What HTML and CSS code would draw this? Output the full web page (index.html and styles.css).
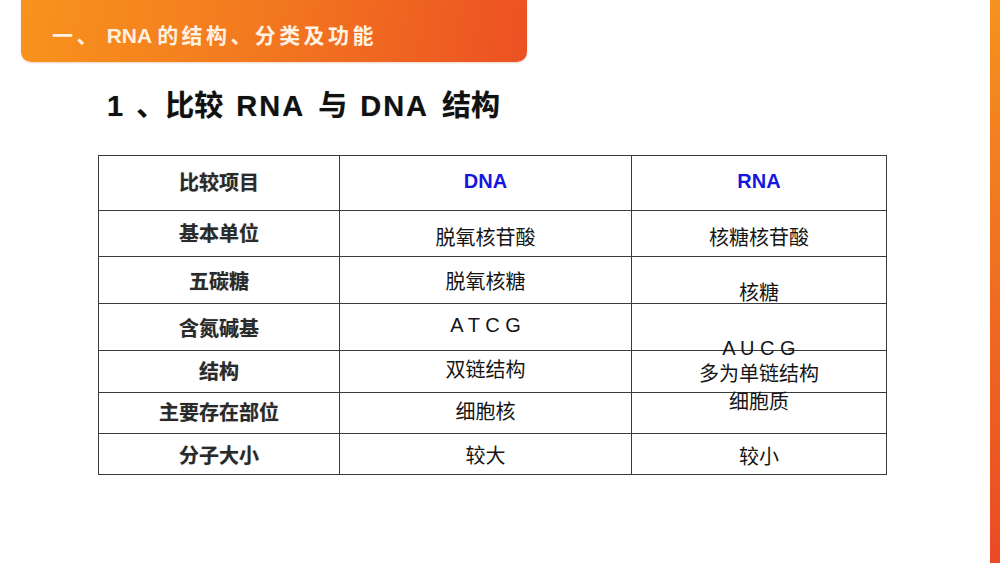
FILE: index.html
```html
<!DOCTYPE html>
<html lang="zh-CN">
<head>
<meta charset="utf-8">
<title>RNA 的结构、分类及功能</title>
<link rel="stylesheet" href="styles.css">
</head>
<body>
<div class="page">
  <div class="main">
    <div class="banner">
      <span class="cjk">一、</span> RNA <span class="cjk">的结构、分类及功能</span>
    </div>
    <h1 class="title">1 、比较 <span class="lat">RNA</span> 与 <span class="lat">DNA</span> 结构</h1>
    <div class="grid">
      <div class="cell head">比较项目</div>
      <div class="cell blue up2">DNA</div>
      <div class="cell blue up2">RNA</div>

      <div class="cell head">基本单位</div>
      <div class="cell down4">脱氧核苷酸</div>
      <div class="cell down4">核糖核苷酸</div>

      <div class="cell head down2">五碳糖</div>
      <div class="cell down2">脱氧核糖</div>
      <div class="cell top"><span class="low">核糖</span></div>

      <div class="cell head down2">含氮碱基</div>
      <div class="cell up2">A T C G</div>
      <div class="cell r4c3"></div>

      <div class="cell head">结构</div>
      <div class="cell up2">双链结构</div>
      <div class="cell r5c3"></div>

      <div class="cell head">主要存在部位</div>
      <div class="cell up1">细胞核</div>
      <div class="cell r6c3"></div>

      <div class="cell head down2">分子大小</div>
      <div class="cell down2">较大</div>
      <div class="cell down3">较小</div>

      <div class="overlay">
        <span class="ov-line">A U C G</span>
        <span class="ov-line">多为单链结构</span>
        <span class="ov-line">细胞质</span>
      </div>
    </div>
  </div>
  <div class="edge"></div>
</div>
</body>
</html>
```

FILE: styles.css
```css
* { box-sizing: border-box; }

html, body {
  margin: 0;
  padding: 0;
  background: #ffffff;
}

body {
  font-family: "Liberation Sans", "Noto Sans CJK SC", sans-serif;
  color: #111;
}

.page {
  display: flex;
  width: 1000px;
  height: 563px;
  overflow: hidden;
}

.main {
  flex: 1;
  display: flex;
  flex-direction: column;
  align-items: flex-start;
}

.edge {
  width: 10px;
  height: 563px;
  background: linear-gradient(180deg, #f6921d 0%, #f06a22 55%, #ea4a24 100%);
}

.banner {
  margin-left: 21px;
  width: 506px;
  height: 62px;
  border-radius: 0 0 10px 10px;
  background: linear-gradient(100deg, #f8931c 0%, #f37a1f 45%, #ec5123 100%);
  box-shadow: 0 1px 2px rgba(180, 80, 20, 0.25);
  padding: 22px 0 0 31px;
  font-size: 21px;
  line-height: 27px;
  font-weight: 700;
  color: #fff1e2;
  white-space: nowrap;
}

.banner .cjk {
  letter-spacing: 3.4px;
}

.title {
  margin: 26px 0 0 107px;
  font-size: 29px;
  line-height: 36px;
  font-weight: 700;
  color: #111;
  word-spacing: 5px;
  white-space: nowrap;
  text-shadow: 0 0 1px rgba(60, 60, 60, 0.5);
}

.title .lat {
  letter-spacing: 2px;
}

.grid {
  margin: 31px 0 0 98px;
  display: grid;
  grid-template-columns: 241px 292px 255px;
  grid-template-rows: 55px 46px 47px 47px 42px 41px 41px;
  border-top: 1px solid #3a3a3a;
  border-left: 1px solid #3a3a3a;
}

.cell {
  min-height: 0;
  border-right: 1px solid #3a3a3a;
  border-bottom: 1px solid #3a3a3a;
  display: flex;
  align-items: center;
  justify-content: center;
  font-size: 20px;
  line-height: 26px;
  color: #151515;
  white-space: nowrap;
}

.head {
  font-weight: 700;
  color: #2a2a2a;
  text-shadow: 0 0 1px rgba(90, 90, 90, 0.6);
}

.blue {
  font-weight: 700;
  color: #1616e0;
}

/* vertical nudges: padding of 2n shifts text by n px */
.up1 { padding-bottom: 2px; }
.up2 { padding-bottom: 4px; }
.down2 { padding-top: 4px; }
.down3 { padding-top: 6px; }
.down4 { padding-top: 8px; }

.top {
  align-items: flex-start;
  overflow: visible;
}

.low {
  display: block;
  margin-top: 23px;
}

.r4c3 { grid-row: 4; grid-column: 3; }
.r5c3 { grid-row: 5; grid-column: 3; }
.r6c3 { grid-row: 6; grid-column: 3; }

.overlay {
  grid-row: 4 / 7;
  grid-column: 3;
  min-height: 0;
  display: flex;
  flex-direction: column;
  align-items: center;
  padding-top: 31px;
  padding-right: 1px;
  font-size: 20px;
  line-height: 26px;
  color: #151515;
  white-space: nowrap;
}

.ov-line:nth-child(3) { margin-top: 2px; }
```
